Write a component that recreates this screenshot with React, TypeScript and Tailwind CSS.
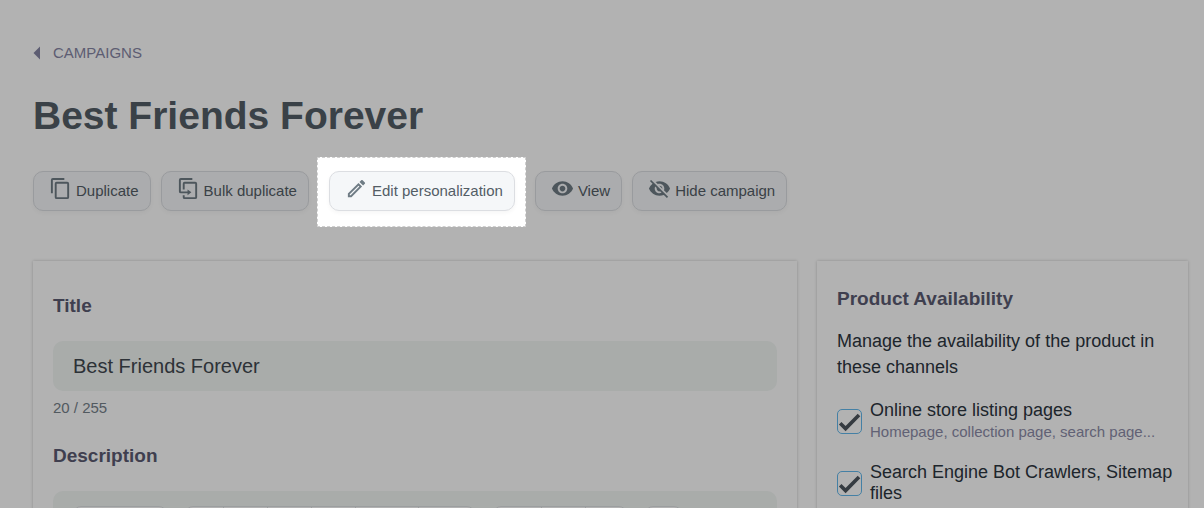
import { MdVisibility, MdVisibilityOff } from 'react-icons/md'
import type { ReactNode } from 'react'

const copyPath =
  'M19,21H8V7H19M19,5H8A2,2 0 0,0 6,7V21A2,2 0 0,0 8,23H19A2,2 0 0,0 21,21V7A2,2 0 0,0 19,5M16,1H4A2,2 0 0,0 2,3V17H4V3H16V1Z'
const bulkCopyPath =
  'M11,17H4A2,2 0 0,1 2,15V3A2,2 0 0,1 4,1H16V3H4V15H11V13L15,16L11,19V17M19,21V7H8V13H6V7A2,2 0 0,1 8,5H19A2,2 0 0,1 21,7V21A2,2 0 0,1 19,23H8A2,2 0 0,1 6,21V19H8V21H19Z'
const pencilPath =
  'M14.06,9L15,9.94L5.92,19H5V18.08L14.06,9M17.66,3C17.41,3 17.15,3.1 16.96,3.29L15.13,5.12L18.88,8.87L20.71,7.04C21.1,6.65 21.1,6 20.71,5.63L18.37,3.29C18.17,3.09 17.92,3 17.66,3M14.06,6.19L3,17.25V21H6.75L17.81,9.94L14.06,6.19Z'

function Icon({ path }: { path: string }) {
  return (
    <svg viewBox="0 0 24 24" fill="currentColor" className="w-full h-full" aria-hidden="true">
      <path d={path} />
    </svg>
  )
}

function ActionButton({ icon, children }: { icon: ReactNode; children: ReactNode }) {
  return (
    <button
      type="button"
      className="h-10 pl-[15px] pr-[11px] flex items-center gap-1 whitespace-nowrap rounded-[10px] border border-[#dcdee2] bg-[#f5f7f9] text-[15px] text-[#535d66] shadow-[0_2px_4px_rgba(0,0,0,0.04)]"
    >
      <span className="w-[23px] h-[23px] mb-1.5 text-[#6f7c85]">{icon}</span>
      {children}
    </button>
  )
}

function Channel({ id, title, hint }: { id: string; title: string; hint?: string }) {
  return (
    <div className="flex items-start gap-2">
      <span className="relative mt-[9px] w-[25px] h-[25px] shrink-0">
        <input
          id={id}
          type="checkbox"
          defaultChecked
          className="peer block w-full h-full appearance-none rounded-[5px] border border-solid border-[#62b8ec] bg-white"
        />
        <svg
          viewBox="0 0 25 25"
          className="absolute inset-0 pointer-events-none hidden peer-checked:block"
          fill="none"
          stroke="#4d555d"
          strokeWidth="3.6"
          aria-hidden="true"
        >
          <path d="M3.2 14.2 8.6 19.6 22 6" />
        </svg>
      </span>
      <label htmlFor={id} className="text-lg leading-[21px] text-[#2c3540]">
        {title}
        {hint && <span className="block text-[15px] text-[#8c8ca8]">{hint}</span>}
      </label>
    </div>
  )
}

// Editor toolbar, one entry per group with the width of each button
const toolbar = [
  ['w-[92px]'],
  ['w-[38px]', 'w-[44px]', 'w-[44px]', 'w-[44px]', 'w-[63px]', 'w-[55px]'],
  ['w-[48px]', 'w-[44px]', 'w-[40px]'],
  ['w-[35px]'],
]

export default function App() {
  return (
    <div className="h-screen overflow-hidden bg-white pl-[33px] pr-4 pt-[43px] font-['Liberation_Sans',Arial,sans-serif]">
      <a href="#campaigns" className="inline-flex items-center gap-3 text-[15px] leading-5 text-[#8686a4]">
        <svg viewBox="0 0 8 14" className="w-2 h-3.5" fill="currentColor" aria-hidden="true">
          <path d="M7 0.5V13.5L0.5 7z" />
        </svg>
        CAMPAIGNS
      </a>

      <h1 className="mt-[25px] text-[39px] leading-[48px] font-bold text-[#535d66]">Best Friends Forever</h1>

      <div className="mt-[31px] flex gap-2.5">
        <ActionButton icon={<Icon path={copyPath} />}>Duplicate</ActionButton>
        <ActionButton icon={<Icon path={bulkCopyPath} />}>Bulk duplicate</ActionButton>
        {/* Spotlight: everything outside of the dashed box is dimmed */}
        <div className="relative mx-2.5">
          <div className="absolute -left-3 -right-[11px] -top-3.5 -bottom-4 z-10 pointer-events-none border border-dashed border-[#cfcfcf] shadow-[0_0_0_2000px_rgba(0,0,0,0.3)]" />
          <ActionButton icon={<Icon path={pencilPath} />}>Edit personalization</ActionButton>
        </div>
        <ActionButton icon={<MdVisibility className="w-full h-full" />}>View</ActionButton>
        <ActionButton icon={<MdVisibilityOff className="w-full h-full" />}>Hide campaign</ActionButton>
      </div>

      <div className="mt-[50px] grid grid-cols-[minmax(0,1fr)_371px] gap-5">
        <section className="h-[600px] px-5 pt-[33px] bg-white shadow-[0_0_3px_rgba(0,0,0,0.22)]">
          <label htmlFor="title" className="block text-[19px] leading-6 font-bold text-[#5b5b72]">
            Title
          </label>
          <input
            id="title"
            type="text"
            defaultValue="Best Friends Forever"
            className="mt-[23px] block w-full h-[50px] rounded-[10px] bg-[#f2f6f4] px-5 text-xl text-[#41484f]"
          />
          <p className="mt-[7px] text-[15px] leading-5 text-[#76818a]">20 / 255</p>
          <h2 className="mt-[26px] text-[19px] leading-6 font-bold text-[#5b5b72]">Description</h2>
          <div className="mt-[23px] h-60 flex gap-[18px] rounded-[10px] bg-[#f2f6f4] px-5 pt-[15px]">
            {toolbar.map((group, i) => (
              <div key={i} className="flex h-10 overflow-hidden rounded-lg border border-[#dfe2e4] bg-white divide-x divide-[#dfe2e4]">
                {group.map((width, j) => (
                  <button key={j} type="button" aria-label="Format" className={width} />
                ))}
              </div>
            ))}
          </div>
        </section>

        <section className="pl-5 pr-3 pt-[26px] bg-white shadow-[0_0_3px_rgba(0,0,0,0.22)]">
          <h2 className="text-[19px] leading-6 font-bold text-[#5b5b72]">Product Availability</h2>
          <p className="mt-[17px] text-lg leading-[26px] text-[#2c3540]">
            Manage the availability of the product in these channels
          </p>
          <div className="mt-5 flex flex-col gap-5">
            <Channel id="store" title="Online store listing pages" hint="Homepage, collection page, search page..." />
            <Channel id="crawlers" title="Search Engine Bot Crawlers, Sitemap files" />
          </div>
        </section>
      </div>
    </div>
  )
}
